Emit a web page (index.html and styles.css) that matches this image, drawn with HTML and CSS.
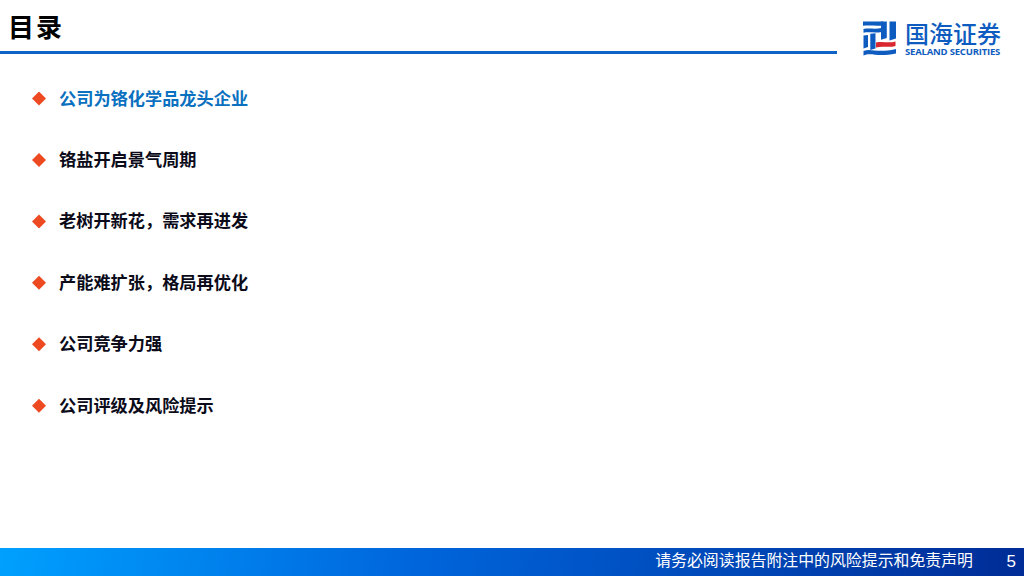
FILE: index.html
```html
<!DOCTYPE html>
<html lang="zh-CN">
<head>
<meta charset="utf-8">
<title>目录</title>
<link rel="stylesheet" href="styles.css">
</head>
<body>
<div class="page">
  <header class="header">
    <div class="title-wrap"><h1 class="title">目录</h1></div>
    <div class="logo">
      <svg class="logo-mark" width="34" height="35" viewBox="0 0 34 35">
        <g fill="#0f5cc0">
          <path d="M0 .5 H20 V4.500 C13 5.300 6 4 0 4.800 Z"/>
          <path d="M.5 8 C6 6.800 12 8.500 18.500 7 V11 C12 12.300 6 10.500 .5 11.800 Z"/>
          <path d="M.5 14.500 L5 14 V26 L.5 27.500 Z"/>
          <path d="M7.300 12.800 L12.500 12.300 V27.500 L7.300 29 Z"/>
          <path d="M18 .5 H23.800 V17 L18 18.800 Z"/>
          <path d="M26.500 .5 H33 V17.500 L26.500 19.500 Z"/>
          <path d="M.5 30 C8 27 14 32.500 33 28 V32.500 C14 36.500 8 31 .5 34.500 Z"/>
        </g>
        <path fill="#d9282f" d="M13 21.500 C20 20 26 22.500 32.500 20.500 V25 C26 27 20 24.500 13 26.400 Z"/>
      </svg>
      <div class="logo-text">
        <div class="logo-cn">国海证券</div>
        <div class="logo-en">SEALAND SECURITIES</div>
      </div>
    </div>
  </header>
  <main class="toc">
    <div class="item active"><span class="bullet"></span><span class="label">公司为铬化学品龙头企业</span></div>
    <div class="item"><span class="bullet"></span><span class="label">铬盐开启景气周期</span></div>
    <div class="item"><span class="bullet"></span><span class="label">老树开新花，需求再进发</span></div>
    <div class="item"><span class="bullet"></span><span class="label">产能难扩张，格局再优化</span></div>
    <div class="item"><span class="bullet"></span><span class="label">公司竞争力强</span></div>
    <div class="item"><span class="bullet"></span><span class="label">公司评级及风险提示</span></div>
  </main>
  <footer class="footer">
    <span class="notice">请务必阅读报告附注中的风险提示和免责声明</span>
    <span class="pageno">5</span>
  </footer>
</div>
</body>
</html>
```
FILE: styles.css
```css
* { box-sizing: border-box; margin: 0; padding: 0; }
html, body { width: 1024px; height: 576px; overflow: hidden; background: #fff; }
body { font-family: "Liberation Sans", "Noto Sans CJK SC", sans-serif; }
.page { width: 1024px; height: 576px; display: flex; flex-direction: column; }
.header { height: 61px; display: flex; align-items: flex-start; }
.title-wrap { width: 837px; height: 54px; border-bottom: 3px solid #0f62c8; padding: 9px 0 0 8px; }
.title { font-size: 26px; line-height: 34px; font-weight: 700; letter-spacing: 2px; color: #000; font-family: "Noto Sans CJK SC", sans-serif; }
.logo { display: flex; gap: 8px; padding: 21px 0 0 26px; }
.logo-mark { display: block; }
.logo-text { display: flex; flex-direction: column; gap: 1px; }
.logo-cn { font-family: "Noto Sans CJK SC", sans-serif; font-size: 24px; line-height: 24px; font-weight: 500; color: #0f5cc0; white-space: nowrap; }
.logo-en { font-family: "Open Sans", sans-serif; font-size: 9.5px; line-height: 11px; font-weight: 700; color: #0f5cc0; white-space: nowrap; letter-spacing: -0.2px; }
.toc { flex: 1; display: flex; flex-direction: column; gap: 36.45px; padding: 25px 0 0 32px; }
.item { height: 25px; display: flex; align-items: center; gap: 13px; font-family: "Noto Sans CJK SC", sans-serif; font-size: 17.2px; font-weight: 700; color: #0b0b1a; white-space: nowrap; }
.item.active { color: #0a70c0; }
.label { line-height: 24px; padding-bottom: 2px; }
.bullet { width: 14px; height: 14px; background: #ee4a22; clip-path: polygon(50% 0, 100% 50%, 50% 100%, 0 50%); }
.footer { height: 28px; flex: none; display: flex; justify-content: flex-end; align-items: center; color: #fff; background: linear-gradient(100deg, #00a0ff 0%, #0066dc 40%, #002c96 100%); }
.notice { font-family: "Noto Sans CJK SC", sans-serif; font-size: 15.9px; line-height: 24px; padding-bottom: 4px; white-space: nowrap; }
.pageno { width: 51px; padding-right: 8px; text-align: right; font-size: 17px; line-height: 24px; padding-bottom: 0; }
```
